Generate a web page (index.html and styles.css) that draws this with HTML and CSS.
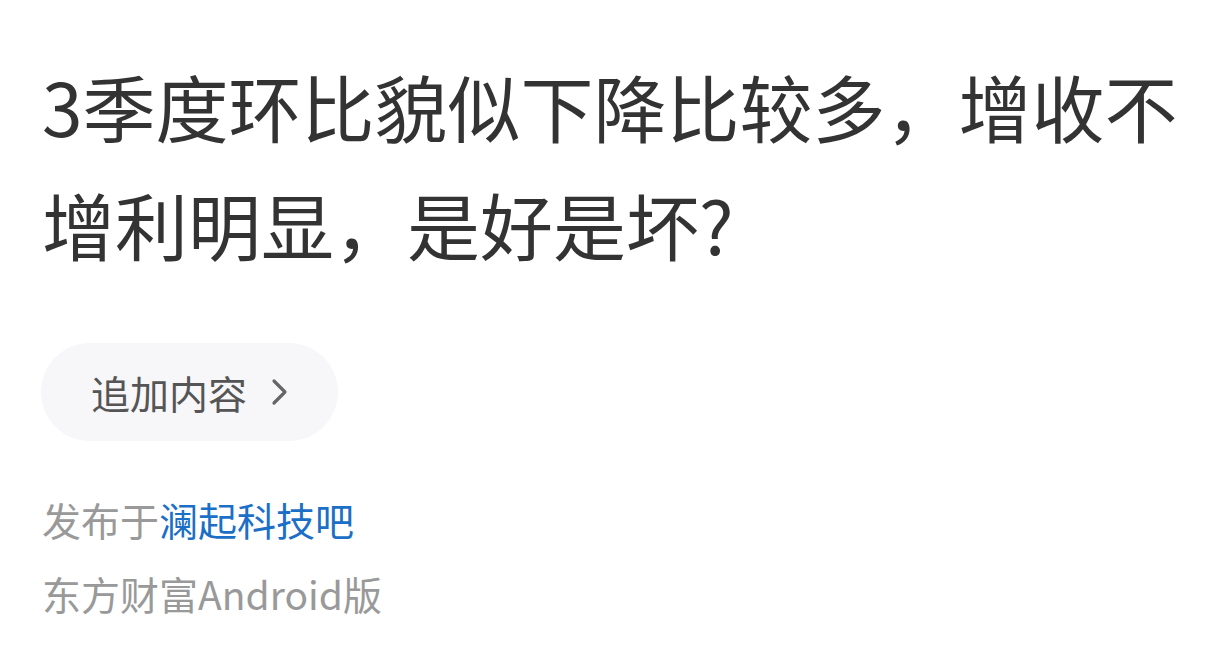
FILE: index.html
```html
<!DOCTYPE html>
<html lang="zh-CN">
<head>
<meta charset="UTF-8" />
<meta name="viewport" content="width=device-width, initial-scale=1" />
<title>帖子</title>
<link rel="stylesheet" href="styles.css">
</head>
<body>
  <div class="post">
    <h1 class="title">3季度环比貌似下降比较多，增收不增利明显，是好是坏?</h1>

    <button class="more">
      <span>追加内容</span>
      <svg class="chev" width="17" height="28" viewBox="0 0 17 28" aria-hidden="true">
        <path d="M3 3 L14 14 L3 25" fill="none" stroke="#666" stroke-width="3.2" stroke-linecap="round" stroke-linejoin="round" />
      </svg>
    </button>

    <div class="meta">
      <p>发布于<a href="#">澜起科技吧</a></p>
      <p>东方财富Android版</p>
    </div>
  </div>
</body>
</html>
```

FILE: styles.css
```css
body {
  margin: 0;
  background: #fff;
  font-family: "Noto Sans CJK SC", "Noto Sans", sans-serif;
  color: #333;
}
.post {
  padding: 46px 42px 0 42px;
}
.title {
  margin: 0;
  font-size: 73px;
  font-weight: normal;
  line-height: 118px;
  color: #333;
}
.more {
  margin-top: 61px;
  margin-left: -1px;
  display: inline-flex;
  align-items: center;
  gap: 24px;
  height: 98px;
  padding: 0 50px 0 50px;
  border: none;
  border-radius: 49px;
  background: #f7f7f9;
  font-family: inherit;
  font-size: 39px;
  color: #555;
}
.more span {
  line-height: 1;
}
.meta {
  margin-top: 41px;
  font-size: 39px;
  color: #999;
}
.meta p {
  margin: 0;
  line-height: 74px;
}
.meta a {
  color: #1b6fc6;
  text-decoration: none;
}
```
